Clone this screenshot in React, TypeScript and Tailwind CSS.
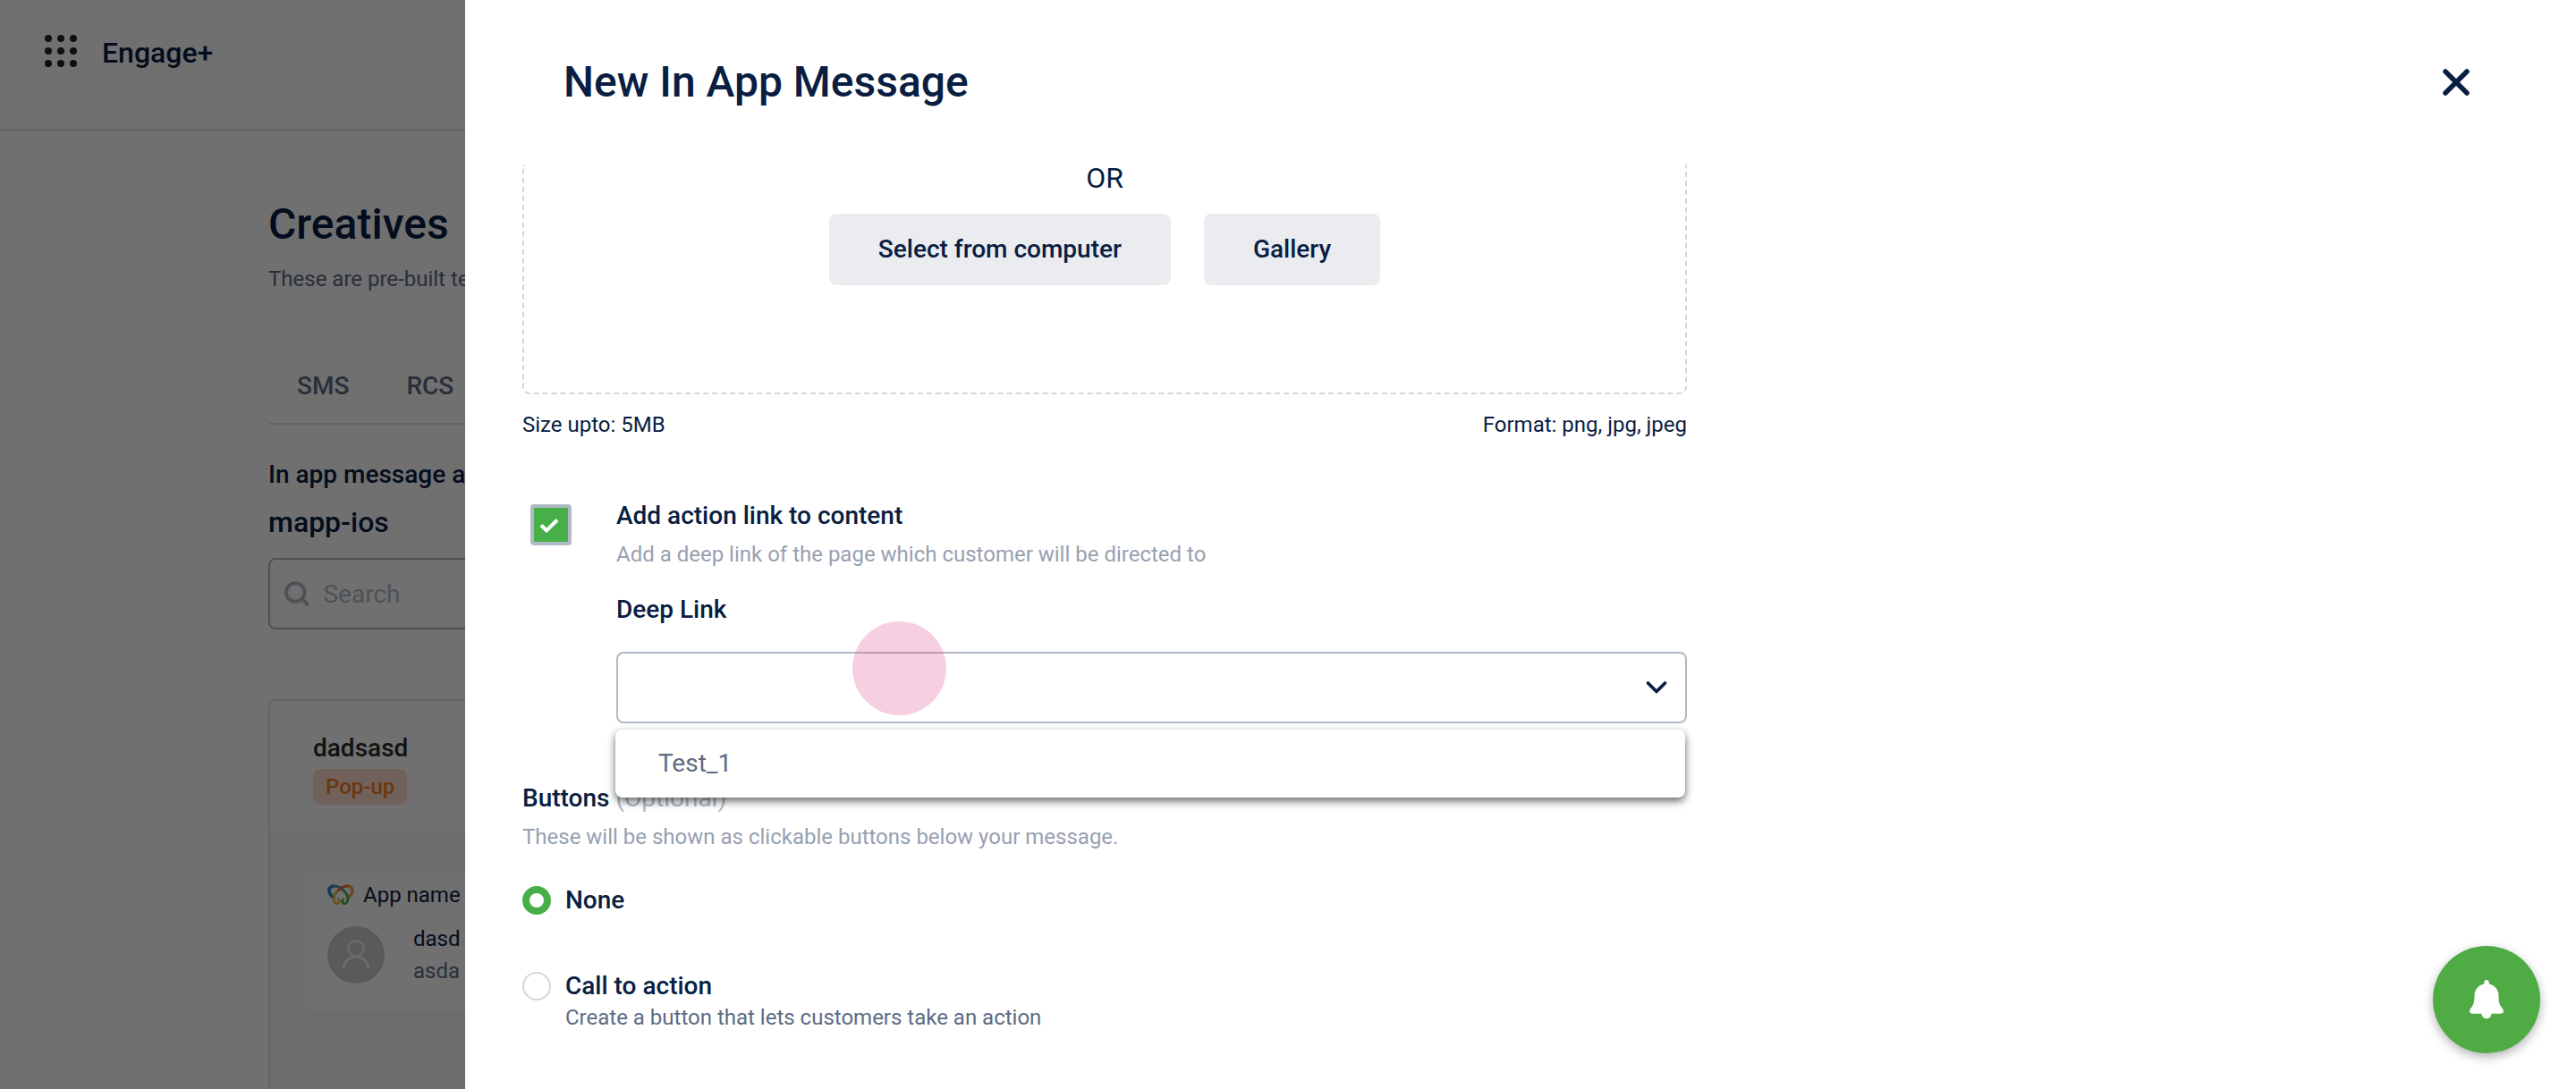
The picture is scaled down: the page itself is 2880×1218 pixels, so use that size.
import { useState } from "react"

const TABS = ["SMS", "RCS"]
const LINKS = ["Test_1"]

function DotsIcon() {
  return (
    <svg width="36" height="36" viewBox="0 0 36 36" fill="#222" aria-hidden="true">
      {[4, 18, 32].map((y) => [4, 18, 32].map((x) => <circle key={`${x}-${y}`} cx={x} cy={y} r="4" />))}
    </svg>
  )
}

function AppLogo() {
  return (
    <svg width="30" height="24" viewBox="0 0 30 24" fill="none" strokeLinecap="round" aria-hidden="true">
      <path d="M7 15C3 12 1.800 9 2 6.500 2.300 3 5 2 8 2" stroke="#2b7fc4" strokeWidth="3.600" />
      <path d="M8 2c4 0 8 3 11 6" stroke="#3fa6b5" strokeWidth="3" />
      <path d="M23 15c4-3 5.200-6 5-8.500C27.700 3 25 2 22 2" stroke="#f0a24a" strokeWidth="3.600" />
      <path d="M22 2c-4 0-8 3-11 6" stroke="#ea6a3a" strokeWidth="3" />
      <path d="M19 8c3 3 4.500 6.500 3.800 10-.6 3-3 4-4.800 3.500-2-.7-2-3.500 0-4.500" stroke="#4fae4e" strokeWidth="2.800" />
      <path d="M11 8c-3 3-4.500 6.500-3.800 10 .6 3 3 4 4.800 3.500 2-.7 2-3.500 0-4.500" stroke="#e8c238" strokeWidth="2.800" />
    </svg>
  )
}

/**
 * Creatives list, dimmed while the drawer is open.
 */
function CreativesPage() {
  return (
    <div className="h-full overflow-hidden bg-white">
      <header className="flex h-[146px] items-start border-b-2 border-[#e2e2e2] pt-[39px] pl-[50px]">
        <DotsIcon />
        <span className="ml-7 text-[32px] leading-10 font-medium">Engage+</span>
      </header>

      <main className="px-[300px] pt-[77px]">
        <h1 className="text-5xl leading-14 font-medium">Creatives</h1>
        <p className="mt-[17px] text-2xl leading-8 whitespace-nowrap text-[#5d6b85]">
          These are pre-built templates
        </p>

        <nav className="mt-[71px] flex border-b-2 border-[#e2e2e2] pt-3 pb-5">
          {TABS.map((tab) => (
            <a key={tab} href="#" className="px-8 text-[28px] leading-[42px] font-medium text-[#5d6b85]">
              {tab}
            </a>
          ))}
        </nav>

        <h2 className="mt-[35px] text-[28px] leading-[42px] font-medium whitespace-nowrap">In app message app</h2>
        <p className="mt-3 text-[32px] leading-10 font-medium">mapp-ios</p>

        <label className="mt-5 flex h-20 items-center rounded-lg border-2 border-[#b0bac7] pl-4">
          <svg width="28" height="28" viewBox="0 0 28 28" fill="none" stroke="#b0bac7" strokeLinecap="round" aria-hidden="true">
            <circle cx="12.500" cy="12.500" r="10.500" strokeWidth="4" />
            <path d="M20.500 20.500l5.500 5.500" strokeWidth="4" />
          </svg>
          <input
            type="text"
            aria-label="Search"
            placeholder="Search"
            className="ml-4 w-full pt-0.5 text-[28px] leading-10 placeholder-[#b0bac7] outline-none"
          />
        </label>

        {/* Creative card */}
        <div className="mt-[78px] overflow-hidden rounded-lg border-2 border-[#e2e2e2]">
          <div className="px-12 pt-8 pb-[30px]">
            <h3 className="text-[28px] leading-[42px] font-medium text-[#2b2b2b]">dadsasd</h3>
            <span className="mt-0.5 inline-flex h-10 items-center rounded-lg bg-[#ffdfcc] px-[14px] align-top text-2xl font-medium text-[#f47b20]">
              Pop-up
            </span>
          </div>
          <div className="min-h-96 bg-[#f1f8f5] px-[37px] pt-[46px]">
            <div className="rounded-b-xl bg-white px-[27px] pt-[9px] pb-[25px]">
              <div className="flex items-center gap-[10px] text-2xl leading-8 whitespace-nowrap">
                <AppLogo />
                App name
              </div>
              <div className="mt-[15px] flex items-center gap-8">
                <svg width="64" height="64" viewBox="0 0 64 64" fill="none" className="shrink-0" aria-hidden="true">
                  <circle cx="32" cy="32" r="32" fill="#cccccc" />
                  <g stroke="#f4f4f4" strokeWidth="2.600">
                    <circle cx="32" cy="25" r="8.700" />
                    <path d="M18.300 47c0-7.500 6-13 13.700-13s13.700 5.500 13.700 13" />
                  </g>
                </svg>
                <div className="text-2xl leading-9">
                  <p>dasd</p>
                  <p className="text-[#5d6b85]">asda</p>
                </div>
              </div>
            </div>
          </div>
        </div>
      </main>
    </div>
  )
}

function RadioOption({
  label,
  hint,
  checked,
  onSelect,
}: {
  label: string
  hint?: string
  checked: boolean
  onSelect: () => void
}) {
  return (
    <label className="flex items-start gap-4">
      <input
        type="radio"
        name="buttons"
        checked={checked}
        onChange={onSelect}
        className="mt-[5px] size-8 shrink-0 appearance-none rounded-full border-2 border-[#d6d6d6] bg-white checked:border-8 checked:border-[#47af47]"
      />
      <span>
        <span className="block text-[28px] leading-[42px] font-medium">{label}</span>
        {hint && <span className="block text-2xl leading-7 text-[#5d6b85]">{hint}</span>}
      </span>
    </label>
  )
}

function DeepLinkSelect() {
  return (
    <div className="relative mt-[26px]">
      <select
        id="deep-link"
        defaultValue=""
        className="block h-20 w-full appearance-none rounded-lg border-2 border-[#b0bac7] bg-white px-12 text-[28px] outline-none"
      >
        <option value="" />
        {LINKS.map((link) => (
          <option key={link} value={link}>
            {link}
          </option>
        ))}
      </select>
      <svg
        width="24"
        height="16"
        viewBox="0 0 24 16"
        fill="none"
        stroke="#091e42"
        strokeWidth="3.600"
        strokeLinecap="round"
        strokeLinejoin="round"
        className="pointer-events-none absolute top-8 right-[22px]"
        aria-hidden="true"
      >
        <path d="M2.500 3l9.500 9.500L21.500 3" />
      </svg>

      {/* Open menu */}
      <ul
        role="listbox"
        aria-label="Deep Link"
        className="absolute top-[87px] right-0.5 -left-px z-10 rounded-lg bg-[#fffffd] py-[18px] shadow-[0_4px_10px_rgba(0,0,0,0.6)]"
      >
        {LINKS.map((link) => (
          <li key={link} role="option" aria-selected="false" className="px-12 text-[28px] leading-10 text-[#5d6b85]">
            {link}
          </li>
        ))}
      </ul>

      {/* Tap highlight */}
      <span className="pointer-events-none absolute -top-[34px] left-[264px] size-[105px] rounded-full bg-[#db3f87]/25" />
    </div>
  )
}

/**
 * Drawer with the in app message form.
 */
function MessageDrawer() {
  const [hasLink, setHasLink] = useState(true)
  const [action, setAction] = useState("none")

  return (
    <section
      role="dialog"
      aria-label="New In App Message"
      className="absolute inset-y-0 right-0 left-[520px] overflow-hidden bg-white"
    >
      <div className="flex items-center justify-between py-16 px-[110px]">
        <h2 className="text-5xl leading-14 font-medium">New In App Message</h2>
        <button type="button" aria-label="Close" className="flex size-12 items-center justify-center">
          <svg width="30" height="30" viewBox="0 0 30 30" stroke="#091e42" strokeWidth="5.500" strokeLinecap="round">
            <path d="M3 3l24 24M27 3L3 27" />
          </svg>
        </button>
      </div>

      <form className="max-w-[1366px] pl-16">
        {/* Upload area */}
        <div className="flex h-[257px] flex-col items-center rounded-b-lg border-2 border-t-0 border-dashed border-[#d6d6d6]">
          <span className="text-[32px] leading-[30px]">OR</span>
          <div className="mt-[25px] flex gap-[37px]">
            <button type="button" className="h-20 rounded-lg bg-[#ebecf0] px-[55px] text-[28px] font-medium">
              Select from computer
            </button>
            <button type="button" className="h-20 rounded-lg bg-[#ebecf0] px-[55px] text-[28px] font-medium">
              Gallery
            </button>
          </div>
        </div>
        <div className="mt-[18px] flex justify-between text-2xl leading-8">
          <span>Size upto: 5MB</span>
          <span>Format: png, jpg, jpeg</span>
        </div>

        {/* Action link */}
        <div className="mt-[65px] flex items-start gap-[50px]">
          <div className="relative mt-2 ml-[9px] size-[46px] shrink-0">
            <input
              id="action-link"
              type="checkbox"
              checked={hasLink}
              onChange={(e) => setHasLink(e.target.checked)}
              className="block size-full appearance-none rounded-[4px] border-4 border-[#b0bac7] checked:bg-[#47af47]"
            />
            {hasLink && (
              <svg
                width="22"
                height="18"
                viewBox="0 0 22 18"
                fill="none"
                stroke="white"
                strokeWidth="4"
                className="pointer-events-none absolute top-[15px] left-[10px]"
                aria-hidden="true"
              >
                <path d="M2 8.500l6 6L20 2.500" />
              </svg>
            )}
          </div>
          <div className="flex-1">
            <label htmlFor="action-link" className="block text-[28px] leading-[42px] font-medium">
              Add action link to content
            </label>
            <p className="mt-1.5 text-2xl leading-8 text-[#97a0b0]">
              Add a deep link of the page which customer will be directed to
            </p>
            <label htmlFor="deep-link" className="mt-[25px] block text-[28px] leading-[42px] font-medium">
              Deep Link
            </label>
            <DeepLinkSelect />
          </div>
        </div>

        {/* Buttons */}
        <h3 className="mt-[63px] text-[28px] leading-[42px] font-medium">
          Buttons <span className="font-normal text-[#b0bac7]">(Optional)</span>
        </h3>
        <p className="mt-1.5 text-2xl leading-8 text-[#97a0b0]">
          These will be shown as clickable buttons below your message.
        </p>
        <div className="mt-[34px] flex flex-col gap-[54px]">
          <RadioOption label="None" checked={action === "none"} onSelect={() => setAction("none")} />
          <RadioOption
            label="Call to action"
            hint="Create a button that lets customers take an action"
            checked={action === "cta"}
            onSelect={() => setAction("cta")}
          />
        </div>
      </form>
    </section>
  )
}

export default function App() {
  return (
    <div className="relative h-screen overflow-hidden font-[Roboto,sans-serif] text-[#091e42]">
      <CreativesPage />
      <div className="absolute inset-0 bg-black/56" />
      <MessageDrawer />

      <button
        type="button"
        aria-label="Notifications"
        className="absolute right-10 bottom-10 flex size-[120px] items-center justify-center rounded-full bg-[#4fac45] shadow-[0_4px_12px_rgba(0,0,0,0.3)]"
      >
        <svg width="38" height="44" viewBox="0 0 38 44" fill="white" aria-hidden="true">
          <path d="M19 0c1.600 0 2.800 1.200 2.800 2.800v1.700c6.200 1.200 10.700 6.500 10.700 13 0 7.500 1 10.500 4.300 14.500 2.300 2.800.8 5.800-2.300 5.800H24.500a5.500 5.500 0 0 1-11 0H3.500C.4 37.800-1.100 34.800 1.200 32 4.500 28 5.500 25 5.500 17.500c0-6.500 4.500-11.800 10.700-13V2.800C16.200 1.200 17.400 0 19 0z" />
        </svg>
      </button>
    </div>
  )
}
